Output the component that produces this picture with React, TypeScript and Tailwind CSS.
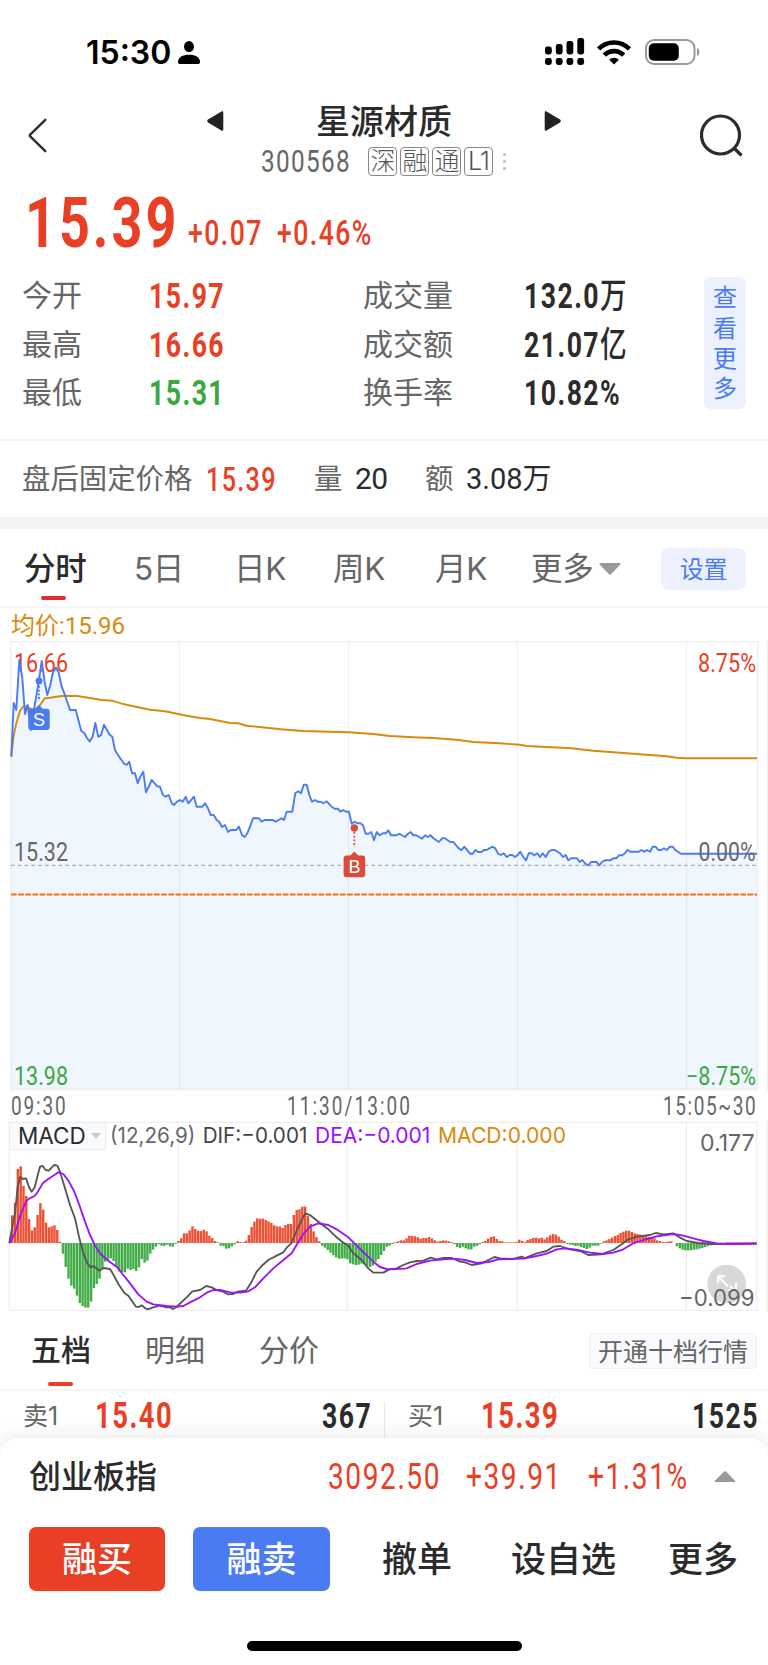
import React from 'react';

const BADGES = ['深', '融', '通', 'L1'];

const PRICE_LINE =
    '11.3,756.7 13.7,703 16.3,710 19.3,660 22.3,678 25,714 27.7,705 30.7,730 33.3,713 36,698 39,680 41.7,661 44.7,682 47.3,695 50.3,685 53,672 56,667.5 58.7,672.5 61.7,686.7 64.3,693.3 70,710 75.7,710 81.3,731 84.3,733 87,738 89.7,741.5 92.7,736.5 95.3,723 98.3,736.7 101,735.3 104,724.7 109.7,734.7 112.3,736.7 115,750 118,755 123.7,763.3 126.7,765 129.3,761.7 132,773.3 135,773.3 137.7,783.3 140.3,776.7 143.3,771.7 146,792.3 149,786 151.7,780 157.3,786.3 160,786.7 163,795 165.7,796.7 168.7,795 171.7,803.3 174,805 177,801.7 180,800 182.7,801.7 185.7,796.7 188.3,803.3 194,796.7 196.7,806.7 202.3,806.7 205,803.3 208,808.3 210.7,815 213.7,815 216.7,820 219.3,822 222,827 225,825 228,832 230.7,830 236.3,830 239,826.7 242,835 244.7,837 247.3,833.3 250,826.7 253,818.3 259,818.3 261.7,821.7 264.7,820 272.7,820 275.7,821.7 281.3,818.3 284,820 286.7,811.7 292.3,811.7 295.3,793 298.3,791.3 301,793.3 303.7,784.7 306.7,784.7 309.3,795 312,801.7 315,800 317.7,801.7 320.7,801.7 323.3,803.3 326.7,801.3 331.7,806.7 334.7,808.7 337.7,808.7 340.3,811.7 343.3,810 346,811.7 349,811.7 351.7,823.7 354.7,821.7 357.3,823.3 360.3,823.3 363,825.3 365.7,833.7 368.7,833.7 371.3,832 374,840.3 376.7,832 379.7,835.3 382.7,833.3 385.7,833.3 388.3,830.3 391,835.3 396.7,835.3 399.3,833.7 405,837 408,833.7 410.7,832 413.3,835.3 416.3,835.3 422,838.7 425,835.3 427.7,837 430.3,835.3 434,838.7 439,842 442,838.3 444.7,838.3 450,841.7 453.3,842 458.7,848.3 461.3,850.3 464.3,846.7 470,853.7 472.7,853.7 475.3,850 478.3,852 481.3,852 484,850 486.7,850 492.3,846.7 495.3,848.3 498,853.7 500.7,855 503.7,853.3 506.7,857 509.7,855 512.3,855 515,857 517.7,855 520.3,851.7 523.3,857 526,860.3 528.7,853.3 531.7,853.3 534.3,855.3 537.3,853.3 540,857 542.7,853.3 545.7,857 548.7,851.7 551.7,850 554.7,850 560,853.3 563,857 565.7,855 568.3,860.3 571.3,858.3 577,858.3 579.7,862 582.3,860 585.3,863.7 588.3,865.3 591,862 596.7,862 599.3,865.3 602,862 605,860.3 610.7,860.3 613.3,858.3 616.3,858.3 619,855.3 622,855.3 625,853.3 627.3,850 630.3,851.7 638.7,851.7 641.3,850 644.3,851.7 647,850 650,851.7 652.7,846.7 655.7,846.7 658.3,850 661.3,850 664,848.3 667,850 669.7,846.7 672.7,846.7 675.3,850 681,853.7 757,853.7';

const AVG_LINE =
    '11.3,756.7 13.7,735 16.7,721.7 20,711 22.7,707 26.7,706.3 30.7,708.7 35,709.7 39.3,706 44.7,698.3 50,697.7 60,696.3 65,695.7 77.3,696 90,698 101.7,700 112.3,700.7 121.7,703.7 133.3,706.3 150,709.7 165,711.3 186.7,715.7 200,718 210,719 230,723 238.3,723.3 246.7,725.7 259.3,727 281,729.3 303.3,731 348.3,732.3 373.3,734 390,736 413.3,737.3 433.3,738 456.7,739.7 473.3,742 499.3,743.3 520,744.7 526.7,746 571.7,748.3 593.3,750.7 626.7,753.3 666.7,756.3 676.7,757.7 686.7,758.3 757,758.3';

// one value per minute bar, positive is drawn upwards
const MACD_BARS = [
    83, 121, 222, 230, 171, 141, 72, 38, 47, 84, 120, 100, 61, 47, 50, 53, 39, 4, -32, -72, -107, -128, -137, -158,
    -180, -189, -194, -194, -176, -135, -123, -107, -77, -56, -50, -46, -54, -72, -85, -88, -88, -77, -81, -78, -84,
    -73, -48, -59, -53, -32, -20, -11, -4, -8, -9, -5, -10, -11, -3, 6, 14, 29, 29, 38, 50, 42, 37, 36, 40, 35, 22, 15,
    6, 2, -8, -9, -17, -16, -10, -4, 6, 3, 2, 7, 24, 48, 64, 74, 73, 73, 69, 65, 60, 53, 50, 50, 45, 54, 57, 57, 84, 99,
    101, 109, 109, 82, 57, 35, 18, 5, -8, -14, -21, -29, -37, -43, -47, -47, -46, -49, -61, -64, -66, -65, -62, -64,
    -68, -72, -68, -56, -48, -36, -24, -11, -8, -3, 2, 5, 8, 8, 14, 22, 21, 20, 17, 13, 15, 15, 18, 14, 8, 4, 6, 8, 7,
    5, 3, -4, -12, -15, -11, -16, -19, -19, -11, -9, -4, 3, 7, 13, 18, 20, 12, 6, 5, 2, 2, 2, 2, 3, 10, 6, 3, 9, 12, 15,
    16, 14, 16, 11, 17, 23, 27, 25, 19, 10, 6, -3, -5, -6, -9, -8, -12, -15, -18, -14, -8, -8, -8, -2, 5, 8, 12, 16, 21,
    24, 30, 34, 37, 37, 33, 29, 27, 25, 24, 22, 18, 17, 14, 8, 6, 3, 3, 5, 5, 0, -10, -16, -20, -22, -22, -22, -20, -19,
    -17, -15, -12, -9, -7, -4, -3, -2, -2, -2, 2, 2, 2, 2, 2, 2, 2, 2, 2, 2, 2,
];

const DIF_LINE =
    '28,548 37,500 45,460 53,380 61,350 68,357 78,355 87,382 95,395 104,382 112,350 120,320 128,318 137,330 146,332 154,324 162,315 172,317 180,335 195,385 210,435 225,475 237,530 250,580 262,610 272,622 280,618 298,632 310,624 330,627 338,640 355,672 374,700 385,707 408,740 416,741 425,736 435,744 443,748 460,742 478,737 500,742 510,741 518,747 530,741 543,728 560,712 577,694 600,690 619,678 635,682 650,690 670,695 683,703 700,702 713,695 738,692 755,665 770,635 785,618 805,600 830,587 850,577 860,563 874,550 890,512 905,480 916,460 930,465 955,485 985,508 1010,532 1030,548 1043,555 1060,580 1085,600 1105,625 1120,638 1150,638 1168,628 1190,625 1210,615 1230,607 1250,603 1270,602 1292,593 1310,598 1330,594 1355,594 1380,605 1395,607 1415,615 1445,610 1465,600 1483,591 1500,595 1540,597 1565,590 1575,594 1610,580 1640,573 1660,560 1680,558 1705,567 1740,573 1765,585 1805,583 1820,577 1840,570 1865,553 1885,538 1910,530 1950,525 1967,519 1990,523 2020,520 2040,533 2060,543 2095,549 2140,552 2270,551';

const DEA_LINE =
    '28,550 45,520 61,465 78,425 87,416 104,408 112,398 128,370 146,356 162,346 175,337 190,342 205,362 222,393 238,435 255,485 270,525 285,557 300,580 315,594 330,606 350,620 370,645 390,670 415,703 440,725 460,733 500,738 530,740 550,738 570,727 600,712 620,698 640,690 660,690 690,697 720,698 745,694 765,682 790,655 820,625 850,600 875,580 893,550 910,522 930,500 955,490 985,495 1010,508 1045,532 1070,557 1100,586 1120,605 1140,621 1160,627 1180,628 1220,625 1250,612 1290,602 1330,598 1360,596 1395,600 1430,609 1465,606 1495,598 1570,596 1610,588 1640,581 1670,568 1695,565 1730,569 1770,578 1810,582 1840,578 1870,568 1900,550 1930,540 1970,529 2020,522 2050,527 2080,535 2110,543 2150,550 2200,552 2270,551';

// condensed numerals: the outer box takes the drawn width, the inner text is squeezed into it
const Num: React.FC<{ children: React.ReactNode; className?: string }> = ({ children, className }) => (
    <span className={`shrink-0 whitespace-nowrap font-['Roboto','Noto_Sans_CJK_SC',sans-serif] ${className || ''}`}>
        <span className="inline-block origin-left scale-x-[0.76] tracking-[0.055em]">{children}</span>
    </span>
);

const StatusBar = () => (
    <div className="flex h-[104px] items-center pl-[86px] pr-[68px]">
        <span className="w-[92px] pt-[2px] font-['Inter',sans-serif] text-[32px] font-semibold leading-none text-black">15:30</span>
        <svg width="22" height="24" viewBox="0 0 22 24" className="mt-[2px] fill-black">
            <ellipse cx="11" cy="5.600" rx="5" ry="5.600" />
            <path d="M0 21c0-4.800 4.500-7.300 11-7.300s11 2.500 11 7.300c0 1.500-.8 2-2.300 2H2.300C.8 23 0 22.500 0 21z" />
        </svg>
        <svg width="40" height="28" viewBox="0 0 40 28" className="ml-auto fill-black">
            <rect x="0" y="8.500" width="6.800" height="8" rx="2.400" />
            <rect x="10.800" y="6" width="6.800" height="10.500" rx="2.400" />
            <rect x="21.500" y="3" width="6.800" height="13.500" rx="2.400" />
            <rect x="32.300" y="0" width="6.800" height="16.500" rx="2.400" />
            <rect x="0" y="20" width="6.800" height="7" rx="2.400" />
            <rect x="10.800" y="20" width="6.800" height="7" rx="2.400" />
            <rect x="21.500" y="20" width="6.800" height="7" rx="2.400" />
            <rect x="32.300" y="20" width="6.800" height="7" rx="2.400" />
        </svg>
        <svg width="34" height="25" viewBox="0 0 34 25" className="ml-3" fill="none" stroke="#000" strokeWidth="4.600">
            <path d="M1.600 9a21.500 21.500 0 0 1 30.800 0" />
            <path d="M7.300 15.200a13.700 13.700 0 0 1 19.400 0" />
            <path d="M17 24.600l-4.900-4.900a7 7 0 0 1 9.800 0z" fill="#000" stroke="none" />
        </svg>
        <svg width="55" height="26" viewBox="0 0 55 26" className="ml-[14px]">
            <rect x="1" y="1" width="48.500" height="24" rx="8" fill="none" stroke="#9a9a9a" strokeWidth="2" />
            <rect x="3.800" y="4.200" width="30" height="17.600" rx="5" />
            <path d="M52 9c3.200.8 3.200 7.200 0 8z" fill="#9a9a9a" />
        </svg>
    </div>
);

const Header = () => (
    <header className="flex h-[82px] items-start pl-7 pr-[25px]">
        <svg width="20" height="36" viewBox="0 0 20 36" className="mt-[14px]" fill="none" stroke="#2b2b2b" strokeWidth="2.400" strokeLinecap="round" strokeLinejoin="round">
            <path d="M17.300 1.800 2.200 16.600q-.9.900 0 1.800L17.300 33.200" />
        </svg>
        <div className="ml-[159px] flex w-[354px] flex-col">
            <div className="flex h-[34px] items-center justify-between">
                <svg width="17" height="20" viewBox="0 0 17 20" className="fill-[#222]">
                    <path d="M14.500.6 1 8.500c-1 .6-1 2.300 0 3L14.500 19.400c1 .6 1.800 0 1.800-1V1.600c0-1-.8-1.600-1.800-1z" />
                </svg>
                <h1 className="pt-[2px] text-[34px] font-medium leading-[34px] text-[#2b2b2b]">星源材质</h1>
                <svg width="17" height="20" viewBox="0 0 17 20" className="fill-[#222]">
                    <path d="M2.500.6 16 8.500c1 .6 1 2.300 0 3L2.500 19.400c-1 .6-1.800 0-1.800-1V1.600C.7.600 1.500 0 2.500.6z" />
                </svg>
            </div>
            <div className="mt-2 flex h-[30px] items-center pl-[54px]">
                <Num className="w-[107px] text-[32px] leading-none text-[#666]">300568</Num>
                <div className="flex gap-[3px]">
                    {BADGES.map((b) => (
                        <span key={b} className="flex h-[29px] w-[29px] items-center justify-center rounded-[4px] border border-[#888] font-['Inter','Noto_Sans_CJK_SC',sans-serif] text-[25px] font-light leading-none tracking-[-1px] text-[#555]">
                            {b}
                        </span>
                    ))}
                </div>
                <div className="ml-[10px] flex shrink-0 flex-col gap-1">
                    <i className="size-[3px] rounded-full bg-[#bbb]" />
                    <i className="size-[3px] rounded-full bg-[#bbb]" />
                    <i className="size-[3px] rounded-full bg-[#bbb]" />
                </div>
            </div>
        </div>
        <svg width="43" height="43" viewBox="0 0 43 43" className="ml-auto mt-[10px]" fill="none" stroke="#2b2b2b" strokeWidth="3.200" strokeLinecap="round">
            <circle cx="20.500" cy="21" r="19" />
            <path d="m34.500 34.500 6 6" />
        </svg>
    </header>
);

const Quote = () => (
    <section className="flex h-[253px] flex-col">
        <div className="flex h-[68px] items-end pb-1 text-[#e94025]">
            <Num className="w-[159px] pl-[25px] text-[71px] font-bold leading-[55px]">15.39</Num>
            <Num className="ml-[29px] w-[89px] text-[35px] font-medium leading-[32px]">+0.07</Num>
            <Num className="text-[35px] font-medium leading-[32px]">+0.46%</Num>
        </div>
        <div className="mt-[18px] flex items-start pr-[22px] text-[30px] leading-[48px]">
            <dl className="grid auto-rows-[48.5px] grid-cols-[127px_auto] pl-[22px] text-[#666]">
                <dt>今开</dt>
                <dd className="text-[35px] font-bold text-[#e94025]"><Num>15.97</Num></dd>
                <dt>最高</dt>
                <dd className="text-[35px] font-bold text-[#e94025]"><Num>16.66</Num></dd>
                <dt>最低</dt>
                <dd className="text-[35px] font-bold text-[#3aa83f]"><Num>15.31</Num></dd>
            </dl>
            <dl className="ml-auto mr-[40px] grid auto-rows-[48.5px] grid-cols-[161px_140px] text-[#666]">
                <dt>成交量</dt>
                <dd className="text-[35px] font-bold text-[#2b2b2b]"><Num>132.0<span className="font-medium">万</span></Num></dd>
                <dt>成交额</dt>
                <dd className="text-[35px] font-bold text-[#2b2b2b]"><Num>21.07<span className="font-medium">亿</span></Num></dd>
                <dt>换手率</dt>
                <dd className="text-[35px] font-bold text-[#2b2b2b]"><Num>10.82%</Num></dd>
            </dl>
            <button className="mt-[5px] flex h-[132px] w-[42px] flex-col items-center justify-center rounded-[7px] bg-[#edf1fd] pt-[2px] text-2xl leading-[30.300px] text-[#4b7bf3]">
                <span>查</span>
                <span>看</span>
                <span>更</span>
                <span>多</span>
            </button>
        </div>
    </section>
);

const AfterHours = () => (
    <section className="flex h-[78px] items-center border-t-2 border-[#f5f5f5] pl-[22px] text-[28.400px] leading-none text-[#666]">
        <span className="w-[184px]">盘后固定价格</span>
        <Num className="w-[108px] text-[33px] font-medium text-[#e94025]">15.39</Num>
        <span className="w-[41px]">量</span>
        <span className="w-[70px] font-['Roboto',sans-serif] text-[30px] tracking-[-0.5px] text-[#2b2b2b]">20</span>
        <span className="w-[41px]">额</span>
        <span className="font-['Roboto','Noto_Sans_CJK_SC',sans-serif] text-[29px] text-[#2b2b2b]">3.08万</span>
    </section>
);

const PeriodTabs = () => (
    <nav className="relative flex h-[79px] items-center border-b-2 border-[#f4f4f4] pl-6 pr-[22px] pt-[2px] font-['Inter','Noto_Sans_CJK_SC',sans-serif] text-[31.500px] leading-none tracking-[-0.3px] text-[#666]">
        <span className="w-[110px] font-medium text-[#2b2b2b]">分时</span>
        <span className="w-[100px]">5日</span>
        <span className="w-[99px]">日K</span>
        <span className="w-[102px]">周K</span>
        <span className="w-[96px]">月K</span>
        <span>更多</span>
        <svg width="22" height="12" viewBox="0 0 22 12" className="ml-[6px] fill-[#999]">
            <path d="M1.500 0h19c1 0 1.300 1 .6 1.700L12 11.200c-.6.600-1.400.600-2 0L.8 1.700C.1 1 .5 0 1.500 0z" />
        </svg>
        <button className="ml-auto h-[42px] w-[85px] rounded-[8px] bg-[#edf1fd] pt-[2px] text-2xl leading-none text-[#4b7bf3]">设置</button>
        <i className="absolute bottom-[6px] left-[41px] h-1 w-[25px] rounded-full bg-[#e52c2c]" />
    </nav>
);

const MinuteChart = () => (
    <section className="font-['Roboto','Noto_Sans_CJK_SC',sans-serif]">
        <div className="h-[33px] pl-[11px] pt-[6px] text-[24px] leading-[25px] text-[#d98a0c]">均价:15.96</div>
        <svg width="768" height="450" viewBox="0 641 768 450" className="block" fontSize="25">
            <path d="M767.500 641v450M11 641.500h746.500v448H11z" fill="none" stroke="#efefef" strokeWidth="1.500" />
            <g fill="#e94025">
                <text x="14" y="671.500" textLength="54" lengthAdjust="spacingAndGlyphs">16.66</text>
                <text x="698" y="671.500" textLength="58" lengthAdjust="spacingAndGlyphs">8.75%</text>
            </g>
            <polygon points={`${PRICE_LINE} 757,1089 11.300,1089`} fill="#3d90f8" fillOpacity="0.080" />
            <path d="M179.500 641v448M348.500 641v448M517.500 641v448M686.500 641v448" stroke="#000" strokeOpacity="0.050" strokeWidth="1.200" />
            <path d="M11 865.300h746" stroke="#a9afb8" strokeWidth="1.300" strokeDasharray="3.600 3.200" />
            <path d="M11 894.500h746" stroke="#ff6d0a" strokeWidth="2" strokeDasharray="5.700 1.450" />
            <polyline points={AVG_LINE} fill="none" stroke="#d98a0c" strokeWidth="1.900" />
            <polyline points={PRICE_LINE} fill="none" stroke="#4b7bf3" strokeWidth="1.900" strokeLinejoin="round" />
            <g fill="#666">
                <text x="14" y="860.500" textLength="54" lengthAdjust="spacingAndGlyphs">15.32</text>
                <text x="698.500" y="860.500" textLength="57" lengthAdjust="spacingAndGlyphs">0.00%</text>
            </g>
            <g fill="#3aa83f">
                <text x="14" y="1084.500" textLength="54" lengthAdjust="spacingAndGlyphs">13.98</text>
                <text x="686" y="1084.500" textLength="70" lengthAdjust="spacingAndGlyphs">−8.75%</text>
            </g>
            <g fill="#4b7bf3">
                <circle cx="39" cy="681" r="3.500" />
                <path d="M39 686v15" stroke="#4b7bf3" strokeWidth="1.800" strokeDasharray="1.800 1.900" />
                <path d="m39 705 4 4h-8z" />
                <rect x="28.300" y="708.700" width="21.400" height="21.400" rx="3" />
            </g>
            <g fill="#dc4a38">
                <circle cx="354.300" cy="828" r="3.700" />
                <path d="M354.300 832v15" stroke="#dc4a38" strokeWidth="1.800" strokeDasharray="1.800 1.900" />
                <path d="m354.300 851.500 5 5h-10z" />
                <rect x="343.600" y="855.600" width="21.600" height="21.600" rx="3" />
            </g>
            <g fill="#fff" fontSize="18" textAnchor="middle" fontFamily="Liberation Sans">
                <text x="39" y="725.800">S</text>
                <text x="354.500" y="872.700">B</text>
            </g>
        </svg>
        <div className="flex h-[30px] items-center text-[25px] leading-none text-[#666]">
            <Num className="w-[276px] pl-[11px]"><span className="tracking-[2.400px]">09:30</span></Num>
            <Num className="ml-[11px] w-[376px]"><span className="tracking-[2.700px]">11:30/13:00</span></Num>
            <Num><span className="tracking-[2.100px]">15:05~30</span></Num>
        </div>
    </section>
);

const MacdChart = () => (
    <section className="relative h-[191px] font-['Inter',sans-serif]">
        <svg width="768" height="191" viewBox="0 183 2304 573" className="block" fontSize="66">
            <path d="M28 187h2242v564H28zM535 187v564M1042 187v564M1552 187v564M2059 187v564M2302 183v573" fill="none" stroke="#efefef" strokeWidth="4" />
            {MACD_BARS.map((v, i) => (
                <rect
                    key={i}
                    x={33 + i * 8.45}
                    y={v > 0 ? 549 - v : 549}
                    width={7.3}
                    height={Math.abs(v)}
                    fill={v > 0 ? '#ee5034' : '#43ad4a'}
                />
            ))}
            <polyline points={DIF_LINE} fill="none" stroke="#555" strokeWidth="5.500" strokeLinejoin="round" />
            <polyline points={DEA_LINE} fill="none" stroke="#9b10ff" strokeWidth="5.500" strokeLinejoin="round" />
            <circle cx="2180" cy="672" r="58" fill="#d8d8d8" />
            <path d="M2154 670v-21h21M2156 651l28 28M2190 679l22 16M2186 690h22v-22" fill="none" stroke="#fff" strokeWidth="6" />
            <text x="330" y="250" fill="#666" textLength="256" lengthAdjust="spacingAndGlyphs">(12,26,9)</text>
            <text x="608" y="250" fill="#444" textLength="314" lengthAdjust="spacingAndGlyphs">DIF:−0.001</text>
            <text x="945" y="250" fill="#9b10ff" textLength="346" lengthAdjust="spacingAndGlyphs">DEA:−0.001</text>
            <text x="1314" y="250" fill="#d98a0c" textLength="384" lengthAdjust="spacingAndGlyphs">MACD:0.000</text>
            <g fill="#666" fontSize="69">
                <text x="2100" y="272" textLength="164" lengthAdjust="spacingAndGlyphs">0.177</text>
                <text x="2037" y="738" textLength="227" lengthAdjust="spacingAndGlyphs">−0.099</text>
            </g>
        </svg>
        <button className="absolute left-[9px] top-px flex h-[28px] w-[97px] items-center border border-[#e9ebef] bg-[#f9fafd] pl-2 text-[22.500px] leading-none text-[#2b2b2b]">
            MACD
            <i className="ml-[5px] border-x-[5px] border-t-[6px] border-x-transparent border-t-[#c8c8c8]" />
        </button>
    </section>
);

const DepthTabs = () => (
    <nav className="relative flex h-[79px] items-center border-b-2 border-[#f5f5f5] pl-[31px] pr-[11px] pt-px text-[30px] leading-none text-[#666]">
        <span className="w-[114px] font-medium text-[#2b2b2b]">五档</span>
        <span className="w-[114px]">明细</span>
        <span>分价</span>
        <button className="ml-auto h-[36px] w-[168px] rounded-[5px] border border-[#edeff5] bg-[#f9fafd] pt-[2px] text-[25px] leading-none text-[#666]">开通十档行情</button>
        <i className="absolute bottom-[3px] left-[48px] h-1 w-[25px] rounded-sm bg-[#e94025]" />
    </nav>
);

const DepthRow = () => (
    <section className="flex h-[47px] items-center pb-[2px] pl-[23px] pt-[5px] text-[25px] leading-none text-[#666]">
        <span className="w-[72px] shrink-0 font-['Inter','Noto_Sans_CJK_SC',sans-serif]">卖1</span>
        <Num className="w-[227px] text-[36px] font-bold text-[#e94025]">15.40</Num>
        <Num className="w-[62px] text-[35px] font-bold text-[#2b2b2b]">367</Num>
        <i className="mt-3 h-[41px] w-px shrink-0 bg-[#e8e8e8]" />
        <span className="ml-[23px] w-[73px] shrink-0 font-['Inter','Noto_Sans_CJK_SC',sans-serif]">买1</span>
        <Num className="w-[211px] text-[36px] font-bold text-[#e94025]">15.39</Num>
        <Num className="text-[35px] font-bold text-[#2b2b2b]">1525</Num>
    </section>
);

const BottomSheet = () => (
    <footer className="relative flex h-[227px] flex-col rounded-t-[18px] bg-white shadow-[0_-4px_18px_rgba(0,0,0,0.070)]">
        <div className="flex h-[77px] items-center pl-[29px] text-[#e94025]">
            <span className="w-[299px] text-[32px] font-medium leading-none text-[#2b2b2b]">创业板指</span>
            <Num className="w-[138px] text-[37px] leading-none">3092.50</Num>
            <Num className="w-[122px] text-[37px] leading-none">+39.91</Num>
            <Num className="w-[126px] text-[37px] leading-none">+1.31%</Num>
            <svg width="22" height="12" viewBox="0 0 22 12" className="fill-[#999]">
                <path d="M1.500 11h19c.8 0 1-.6.500-1.200l-8.800-9c-.6-.6-1.700-.6-2.300 0l-9 9c-.5.600-.2 1.200.6 1.200z" />
            </svg>
        </div>
        <div className="mt-3 flex h-16 items-center pl-[29px] text-[35px] font-medium leading-none text-[#2b2b2b]">
            <button className="h-16 w-[136px] rounded-[7px] bg-[#e94025] text-white">融买</button>
            <button className="ml-7 h-16 w-[137px] rounded-[7px] bg-[#4b7bf3] text-white">融卖</button>
            <span className="ml-[52px]">撤单</span>
            <span className="ml-[59px]">设自选</span>
            <span className="ml-[52px]">更多</span>
        </div>
        <i className="mx-auto mt-[50px] h-[10px] w-[275px] rounded-full bg-black" />
    </footer>
);

const App: React.FC = () => (
    <main className="h-[1665px] w-[768px] overflow-hidden bg-white font-['Liberation_Sans','Noto_Sans_CJK_SC',sans-serif]">
        <StatusBar />
        <Header />
        <Quote />
        <AfterHours />
        <div className="h-3 bg-[#f4f4f4]" />
        <PeriodTabs />
        <MinuteChart />
        <MacdChart />
        <DepthTabs />
        <DepthRow />
        <BottomSheet />
    </main>
);

export default App;
